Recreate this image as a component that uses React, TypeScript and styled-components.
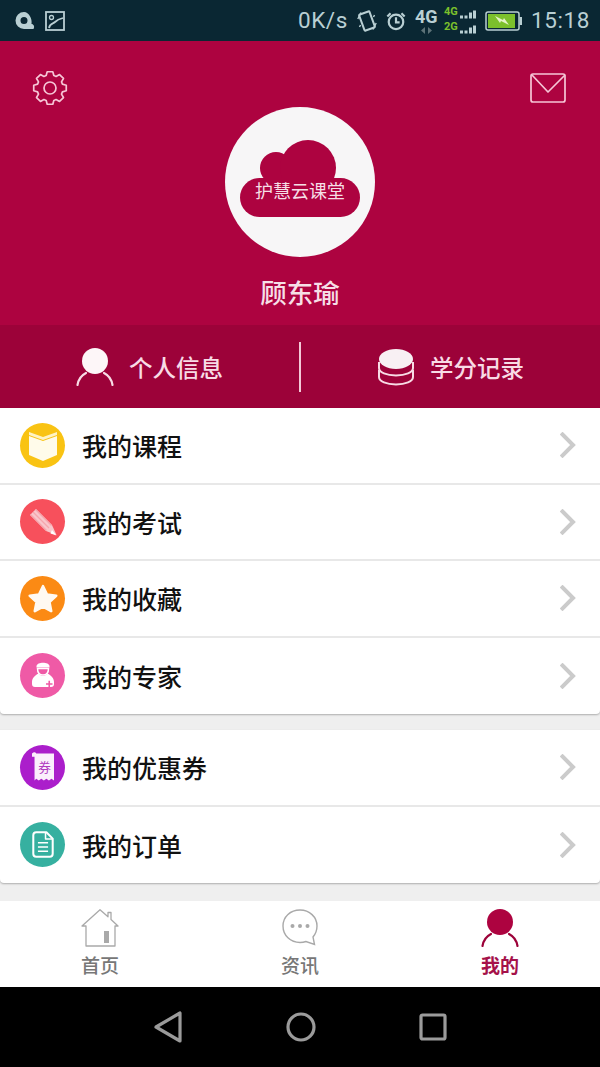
import React from "react"
import styled, { createGlobalStyle } from "styled-components"

const GlobalStyle = createGlobalStyle`
  html, body {
    margin: 0;
    padding: 0;
    background: #efefef;
  }
  * {
    box-sizing: border-box;
  }
`

const Page = styled.div`
  width: 600px;
  height: 1067px;
  display: flex;
  flex-direction: column;
  overflow: hidden;
  background: #efefef;
  font-family: "Noto Sans CJK SC", "Liberation Sans", sans-serif;
`

const StatusBar = styled.div`
  height: 41px;
  flex: none;
  display: flex;
  align-items: center;
  justify-content: space-between;
  padding: 0 10px 0 15px;
  background: #0a2733;
  color: #b9cfd3;
`

const StatusGroup = styled.div<{ $gap: number }>`
  display: flex;
  align-items: center;
  gap: ${(props) => props.$gap}px;
`

const StatusText = styled.span`
  font-family: "Roboto", "Liberation Sans", sans-serif;
  font-size: 22.5px;
  letter-spacing: 0.6px;
  line-height: 1;
`

const Profile = styled.div`
  height: 284px;
  flex: none;
  display: flex;
  flex-direction: column;
  align-items: center;
  background: #ad0340;
`

const ProfileTop = styled.div`
  width: 100%;
  height: 66px;
  flex: none;
  display: flex;
  justify-content: space-between;
  align-items: center;
  padding: 29px 34px 1px 32px;
`

const Avatar = styled.div`
  width: 150px;
  height: 150px;
  flex: none;
  padding-bottom: 6px;
  border-radius: 50%;
  background: #f7f6f7;
  display: flex;
  align-items: center;
  justify-content: center;
`

const UserName = styled.div`
  margin-top: 13px;
  font-size: 26.5px;
  font-weight: 500;
  line-height: 44px;
  color: #f6dfe6;
`

const ActionBar = styled.div`
  height: 83px;
  flex: none;
  display: flex;
  align-items: center;
  background: #9c0239;
`

const Action = styled.div`
  flex: 1;
  display: flex;
  align-items: center;
  justify-content: center;
  gap: 15px;
  font-size: 23.5px;
  font-weight: 500;
  color: #f8dbe5;
`

const Divider = styled.div`
  width: 2px;
  height: 50px;
  flex: none;
  background: #f3c9d7;
`

const Card = styled.div<{ $gap: number }>`
  flex: none;
  margin-bottom: ${(props) => props.$gap}px;
  background: #fff;
  border-radius: 0 0 4px 4px;
  box-shadow: 0 1px 2px rgba(0, 0, 0, 0.28);
`

const Row = styled.div<{ $last?: boolean }>`
  height: 76.5px;
  display: flex;
  align-items: center;
  padding: 0 24px 0 20px;
  border-bottom: ${(props) => (props.$last ? "none" : "2px solid #e8e8e8")};
`

const RowIcon = styled.div<{ $color: string }>`
  width: 45px;
  height: 45px;
  flex: none;
  border-radius: 50%;
  background: ${(props) => props.$color};
  display: flex;
  align-items: center;
  justify-content: center;
`

const RowLabel = styled.div`
  flex: 1;
  margin-left: 17px;
  font-size: 25px;
  font-weight: 500;
  color: #111;
`

const TabBar = styled.div`
  height: 86px;
  flex: none;
  display: flex;
  background: #fff;
`

const Tab = styled.div<{ $active?: boolean }>`
  flex: 1;
  display: flex;
  flex-direction: column;
  align-items: center;
  padding-top: 8px;
  font-size: 19px;
  font-weight: ${(props) => (props.$active ? 700 : 500)};
  line-height: 26px;
  color: ${(props) => (props.$active ? "#a5114a" : "#777")};
`

const TabIcon = styled.div`
  height: 40px;
  flex: none;
  margin-bottom: 3px;
`

const NavBar = styled.div`
  flex: 1;
  display: flex;
  align-items: center;
  justify-content: center;
  gap: 103px;
  background: #000;
`

// 8 rounded teeth round a centre point
const gearPath = () => {
  const cx = 18
  const cy = 18
  const points: string[] = []
  for (let i = 0; i < 8; i++) {
    const a = (i * Math.PI) / 4 - Math.PI / 2
    const at = (r: number, d: number) =>
      `${(cx + r * Math.cos(a + d)).toFixed(2)} ${(cy + r * Math.sin(a + d)).toFixed(2)}`
    points.push(`${at(13, -0.3)}L${at(16.5, -0.17)}L${at(16.5, 0.17)}L${at(13, 0.3)}`)
  }
  return `M${points.join("L")}Z`
}

const Gear = () => (
  <svg width="36" height="36" viewBox="0 0 36 36" fill="none" stroke="#f6c6d6" strokeWidth="1.7" strokeLinejoin="round">
    <path d={gearPath()} />
    <circle cx="18" cy="18" r="6" />
  </svg>
)

const Mail = () => (
  <svg width="36" height="30" viewBox="0 0 36 30" fill="none" stroke="#f6c6d6" strokeWidth="1.7" strokeLinejoin="round">
    <rect x="1" y="1" width="34" height="28" rx="2" />
    <path d="M2 2l16 17L35 2" />
  </svg>
)

const LogoCloud = () => (
  <svg width="120" height="78" viewBox="0 0 120 78">
    <g fill="#ad0340">
      <circle cx="36" cy="28" r="16" />
      <circle cx="68" cy="28" r="28" />
      <rect x="0" y="38" width="120" height="39" rx="19.5" />
    </g>
    <text x="60" y="58" textAnchor="middle" fontSize="18" fill="#f6dfe6" fontFamily="Noto Sans CJK SC, sans-serif">
      护慧云课堂
    </text>
  </svg>
)

const Person = ({ head, arc }: { head: string; arc: string }) => (
  <svg width="38" height="38" viewBox="0 0 38 38" fill="none">
    <path d="M1.500 37C2.500 31 6 27 10 25M36.500 37C35.500 31 32 27 28 25" stroke={arc} strokeWidth="2.200" strokeLinecap="round" />
    <circle cx="19" cy="13" r="13" fill={head} />
  </svg>
)

const Coins = () => (
  <svg width="38" height="38" viewBox="0 0 38 38" fill="none" stroke="#f8dbe5" strokeWidth="2">
    <path d="M2 14v6c0 4.500 7.500 7.500 17 7.500S36 24.500 36 20v-6" />
    <path d="M2 22v7c0 4.500 7.500 7.500 17 7.500S36 33.500 36 29v-7" />
    <ellipse cx="19" cy="11" rx="17" ry="10" fill="#f8f0f3" stroke="none" />
  </svg>
)

const Chevron = () => (
  <svg width="16" height="26" viewBox="0 0 16 26" fill="none" stroke="#cbcbcb" strokeWidth="4" strokeLinecap="square">
    <path d="M2.500 2.500L13 13 2.500 23.500" />
  </svg>
)

const BookGlyph = () => (
  <svg width="28" height="31" viewBox="0 0 28 31">
    <path d="M0 2l14 5 14-5v3L14 10 0 5z" fill="#fff3c4" />
    <path d="M0 6l14 5 14-5v19l-14 6-14-6z" fill="#fffbea" />
  </svg>
)

const PencilGlyph = () => (
  <svg width="28" height="28" viewBox="0 0 28 28">
    <path d="M1 7l6-6 16 16 4.500 10L17 23z" fill="#f9c6cb" />
    <path d="M4 4l16 16M1.500 6.500l16 16M6.500 1.500l16 16" stroke="#f6a5ac" strokeWidth="1.200" fill="none" />
    <path d="M23 22l4.500 5.500-6-2z" fill="#fff" />
  </svg>
)

const StarGlyph = () => (
  <svg width="30" height="29" viewBox="0 0 34 33">
    <path
      d="M17 2.500l4.500 9.500 10.500 1.300-7.700 7.200 2 10.300L17 25.700 7.700 30.800l2-10.300-7.700-7.200L12.500 12z"
      fill="#fff9f2"
      stroke="#fff9f2"
      strokeWidth="3"
      strokeLinejoin="round"
    />
  </svg>
)

const DoctorGlyph = () => (
  <svg width="22" height="30" viewBox="0 0 22 30">
    <path d="M4.500 5C5 .5 17 .5 17.500 5v1.500h-13z" fill="#fff" />
    <path d="M5.500 7.500h11c0 4-2 6.500-5.500 6.500s-5.500-2.500-5.500-6.500z" fill="none" stroke="#fff" strokeWidth="1.500" />
    <path d="M6.500 12.500c2.500 3 6.500 3 9 0 4 2 6.500 5 6.500 8.500v2c0 2-1 3-3 3H3c-2 0-3-1-3-3v-2c0-3.500 2.500-6.500 6.500-8.500z" fill="#fff" />
    <path d="M14 23h6.500M17.250 19.750v6.500" stroke="#ef5aa6" strokeWidth="1.600" />
  </svg>
)

const CouponGlyph = () => (
  <svg width="22" height="32" viewBox="0 0 26 36">
    <path d="M0 2c2-2 4-2 5 0h21v32l-3-2-3 2-3-2-3 2-3-2-3 2-3-2-2 2V6H0z" fill="#fbeefc" />
    <text x="15" y="24" textAnchor="middle" fontSize="15" fill="#b13bc0" fontFamily="Noto Sans CJK SC, sans-serif">
      券
    </text>
  </svg>
)

const DocGlyph = () => (
  <svg width="22" height="27" viewBox="0 0 26 32" fill="none" stroke="#fff" strokeWidth="2.400" strokeLinejoin="round">
    <path d="M5 1.500h12l7.500 7.500v18c0 2-1.500 3.500-3.500 3.500H5c-2 0-3.500-1.500-3.500-3.500V5C1.500 3 3 1.500 5 1.500z" />
    <path d="M16 1.500v8h8.500M7 14h12M7 19h12M7 24h12" strokeWidth="1.800" />
  </svg>
)

const HomeIcon = () => (
  <svg width="38" height="38" viewBox="0 0 38 38" fill="none" stroke="#a9a9a9" strokeWidth="1.300">
    <path d="M1 17L19 .8l8 7V3.500h3v7l7 6.500h-3v20H5V17z" strokeLinejoin="round" />
    <rect x="23" y="22" width="5" height="12" fill="#a9a9a9" stroke="none" />
  </svg>
)

const ChatIcon = () => (
  <svg width="36" height="37" viewBox="0 0 36 37" fill="none" stroke="#a9a9a9" strokeWidth="1.400">
    <path d="M18 1c9.500 0 17 7 17 16 0 4-1.500 8-4 11l1.500 7.500-8.500-3c-2 .7-4 1-6 1-9.500 0-17-7-17-16.500S8.500 1 18 1z" />
    <circle cx="10.500" cy="17" r="2" fill="#a9a9a9" stroke="none" />
    <circle cx="18" cy="17" r="2" fill="#a9a9a9" stroke="none" />
    <circle cx="25.500" cy="17" r="2" fill="#a9a9a9" stroke="none" />
  </svg>
)

const NavBack = () => (
  <svg width="30" height="34" viewBox="0 0 30 34" fill="none" stroke="#9b9b9b" strokeWidth="3.200" strokeLinejoin="round">
    <path d="M27 3v28L3 17z" />
  </svg>
)

const NavHome = () => (
  <svg width="30" height="30" viewBox="0 0 30 30" fill="none" stroke="#9b9b9b" strokeWidth="3.200">
    <circle cx="15" cy="15" r="13" />
  </svg>
)

const NavRecent = () => (
  <svg width="28" height="28" viewBox="0 0 28 28" fill="none" stroke="#9b9b9b" strokeWidth="3.200" strokeLinejoin="round">
    <rect x="2" y="2" width="24" height="24" rx="1.500" />
  </svg>
)

const statusColor = "#b9cfd3"
const signalGreen = "#7cc02c"

const StatusLeft = () => (
  <StatusGroup $gap={10}>
    <svg width="20" height="20" viewBox="0 0 20 20">
      <path d="M9 1a8.500 8.500 0 0 0 0 17h9.500c1.500-2.500 0-5-2-5 1-5-2.500-12-7.500-12zm0 5a3.500 3.500 0 1 1 0 7 3.500 3.500 0 0 1 0-7z" fill={statusColor} />
    </svg>
    <svg width="20" height="20" viewBox="0 0 20 20" fill="none" stroke={statusColor} strokeWidth="1.800">
      <rect x="1" y="1" width="18" height="18" />
      <circle cx="6.500" cy="6.500" r="2" strokeWidth="1.300" />
      <path d="M4 17c1-5 4-4 6-6s4-3 8-4" />
    </svg>
  </StatusGroup>
)

const StatusRight = () => (
  <StatusGroup $gap={9}>
    <StatusText>0K/s</StatusText>
    <svg width="20" height="22" viewBox="0 0 20 22" fill="none" stroke={statusColor} strokeWidth="2">
      <rect x="4.500" y="2.500" width="11" height="17" rx="1" transform="rotate(-20 10 11)" />
      <path d="M.8 9L4 2.500M19.200 13L16 19.500M3.500 15l-1 2M16.500 7l1-2" strokeWidth="1.400" />
    </svg>
    <svg width="20" height="20" viewBox="0 0 22 22" fill="none" stroke={statusColor} strokeWidth="2.400">
      <circle cx="11" cy="12" r="8" />
      <path d="M11 7v5.500h4M1.500 6L5 2.500M20.500 6L17 2.500" />
    </svg>
    <StatusGroup $gap={4}>
      <svg width="23" height="28" viewBox="0 0 23 28">
        <text x="0" y="16" fontSize="18" fontWeight="700" fill={statusColor} fontFamily="Roboto, sans-serif">
          4G
        </text>
        <path d="M10 20l-4 3.500 4 3.500zM13 20l4 3.500-4 3.500z" fill="#5d7278" />
      </svg>
      <svg width="34" height="30" viewBox="0 0 34 30">
        <text x="2" y="9" fontSize="11" fontWeight="700" fill={signalGreen} fontFamily="Roboto, sans-serif">
          4G
        </text>
        <text x="2" y="24" fontSize="11" fontWeight="700" fill={signalGreen} fontFamily="Roboto, sans-serif">
          2G
        </text>
        {[0, 15].map((y) => (
          <g key={y} fill={statusColor}>
            <rect x="18" y={9.500 + y} width="3" height="3" />
            <rect x="22.500" y={9.500 + y} width="3" height="3" />
            <rect x="27" y={6.500 + y} width="3" height="6" />
            <rect x="31" y={4.500 + y} width="3" height="8" />
          </g>
        ))}
      </svg>
    </StatusGroup>
    <StatusGroup $gap={8}>
      <svg width="38" height="20" viewBox="0 0 38 20">
        <rect x="1" y="1" width="33" height="18" rx="2" fill="none" stroke={statusColor} strokeWidth="1.500" />
        <rect x="3" y="3" width="27" height="14" fill={signalGreen} />
        <path d="M34.500 6h2.500v8h-2.500z" fill={statusColor} />
        <path d="M10 5l8 4 1-2 5 7-8-4-1 2z" fill="#e5f3c9" />
      </svg>
      <StatusText>15:18</StatusText>
    </StatusGroup>
  </StatusGroup>
)

const topRows = [
  { label: "我的课程", color: "#f9c313", glyph: <BookGlyph /> },
  { label: "我的考试", color: "#f7505c", glyph: <PencilGlyph /> },
  { label: "我的收藏", color: "#fb8a14", glyph: <StarGlyph /> },
  { label: "我的专家", color: "#ef5aa6", glyph: <DoctorGlyph /> },
]

const bottomRows = [
  { label: "我的优惠券", color: "#ab1ecb", glyph: <CouponGlyph /> },
  { label: "我的订单", color: "#36b0a0", glyph: <DocGlyph /> },
]

type RowData = (typeof topRows)[number]

const MenuCard = ({ rows, gap }: { rows: RowData[]; gap: number }) => (
  <Card $gap={gap}>
    {rows.map((row, index) => (
      <Row key={row.label} $last={index === rows.length - 1}>
        <RowIcon $color={row.color}>{row.glyph}</RowIcon>
        <RowLabel>{row.label}</RowLabel>
        <Chevron />
      </Row>
    ))}
  </Card>
)

export default function App() {
  return (
    <Page>
      <GlobalStyle />
      <StatusBar>
        <StatusLeft />
        <StatusRight />
      </StatusBar>
      <Profile>
        <ProfileTop>
          <Gear />
          <Mail />
        </ProfileTop>
        <Avatar>
          <LogoCloud />
        </Avatar>
        <UserName>顾东瑜</UserName>
      </Profile>
      <ActionBar>
        <Action>
          <Person head="#fdf6f8" arc="#f8dbe5" />
          个人信息
        </Action>
        <Divider />
        <Action>
          <Coins />
          学分记录
        </Action>
      </ActionBar>
      <MenuCard rows={topRows} gap={16} />
      <MenuCard rows={bottomRows} gap={18} />
      <TabBar>
        <Tab>
          <TabIcon>
            <HomeIcon />
          </TabIcon>
          首页
        </Tab>
        <Tab>
          <TabIcon>
            <ChatIcon />
          </TabIcon>
          资讯
        </Tab>
        <Tab $active>
          <TabIcon>
            <Person head="#ad0340" arc="#9c0239" />
          </TabIcon>
          我的
        </Tab>
      </TabBar>
      <NavBar>
        <NavBack />
        <NavHome />
        <NavRecent />
      </NavBar>
    </Page>
  )
}
